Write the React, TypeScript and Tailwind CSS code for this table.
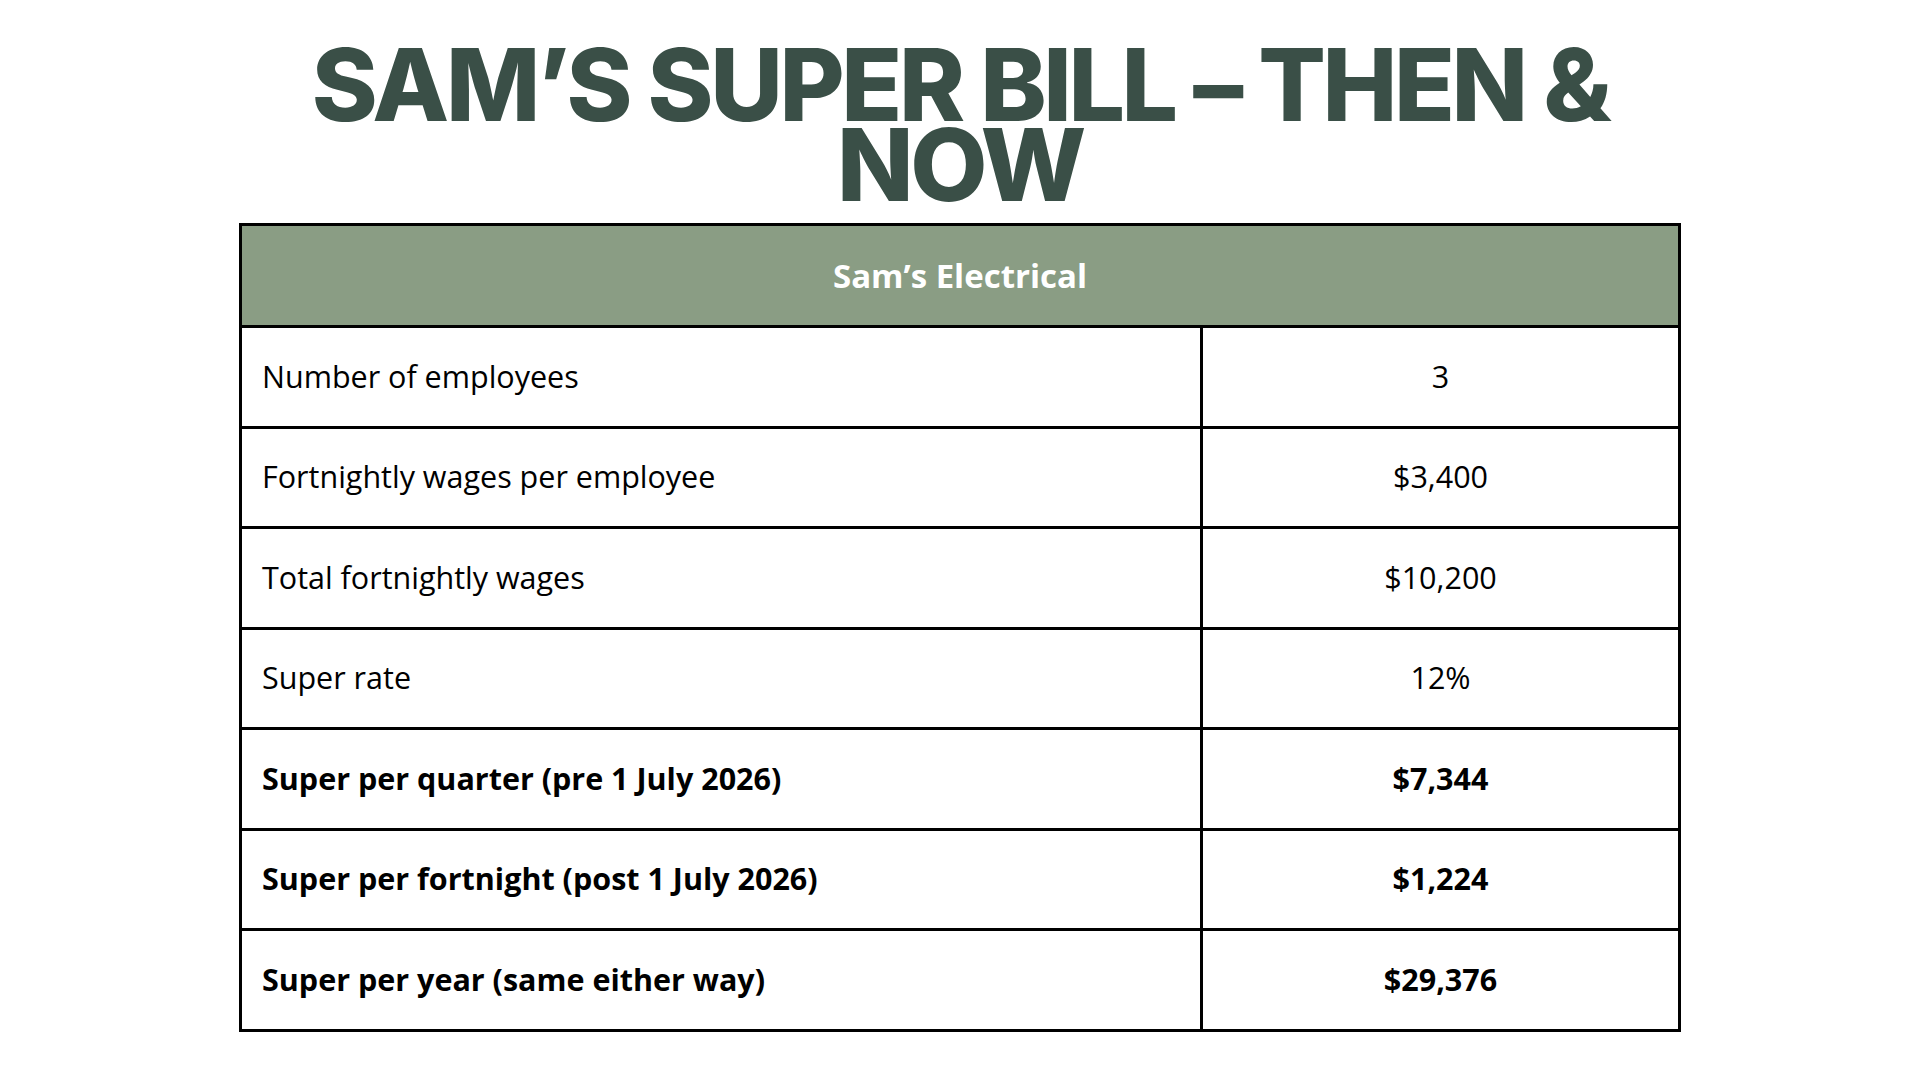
const rows = [
  { label: 'Number of employees', value: '3', bold: false },
  { label: 'Fortnightly wages per employee', value: '$3,400', bold: false },
  { label: 'Total fortnightly wages', value: '$10,200', bold: false },
  { label: 'Super rate', value: '12%', bold: false },
  { label: 'Super per quarter (pre 1 July 2026)', value: '$7,344', bold: true },
  { label: 'Super per fortnight (post 1 July 2026)', value: '$1,224', bold: true },
  { label: 'Super per year (same either way)', value: '$29,376', bold: true },
]

export default function App() {
  return (
    <div className="w-[1920px] h-[1080px] bg-white flex flex-col items-center pt-[45px]">
      {/* Title */}
      <h1 className="font-['Inter',sans-serif] font-extrabold text-[100px] leading-[80px] tracking-[-3.4px] text-[#3a4f47] text-center w-[1400px]">
        SAM’S SUPER BILL – THEN &amp; NOW
      </h1>

      {/* Table */}
      <table className="mt-[18px] w-[1442px] border-collapse border-[3px] border-black font-['Open_Sans',sans-serif] text-[30.5px] text-black">
        <thead>
          <tr className="h-[102px] bg-[#8a9d84]">
            <th colSpan={2} className="border-[3px] border-black text-white text-[33px] font-bold text-center">
              Sam’s Electrical
            </th>
          </tr>
        </thead>
        <tbody>
          {rows.map((row) => (
            <tr key={row.label} className="h-[100.5px]">
              <td className={`w-[961px] border-[3px] border-black pl-[20px] text-left ${row.bold ? 'font-bold' : 'font-normal'}`}>
                {row.label}
              </td>
              <td className={`border-[3px] border-black text-center ${row.bold ? 'font-bold' : 'font-normal'}`}>
                {row.value}
              </td>
            </tr>
          ))}
        </tbody>
      </table>
    </div>
  )
}
